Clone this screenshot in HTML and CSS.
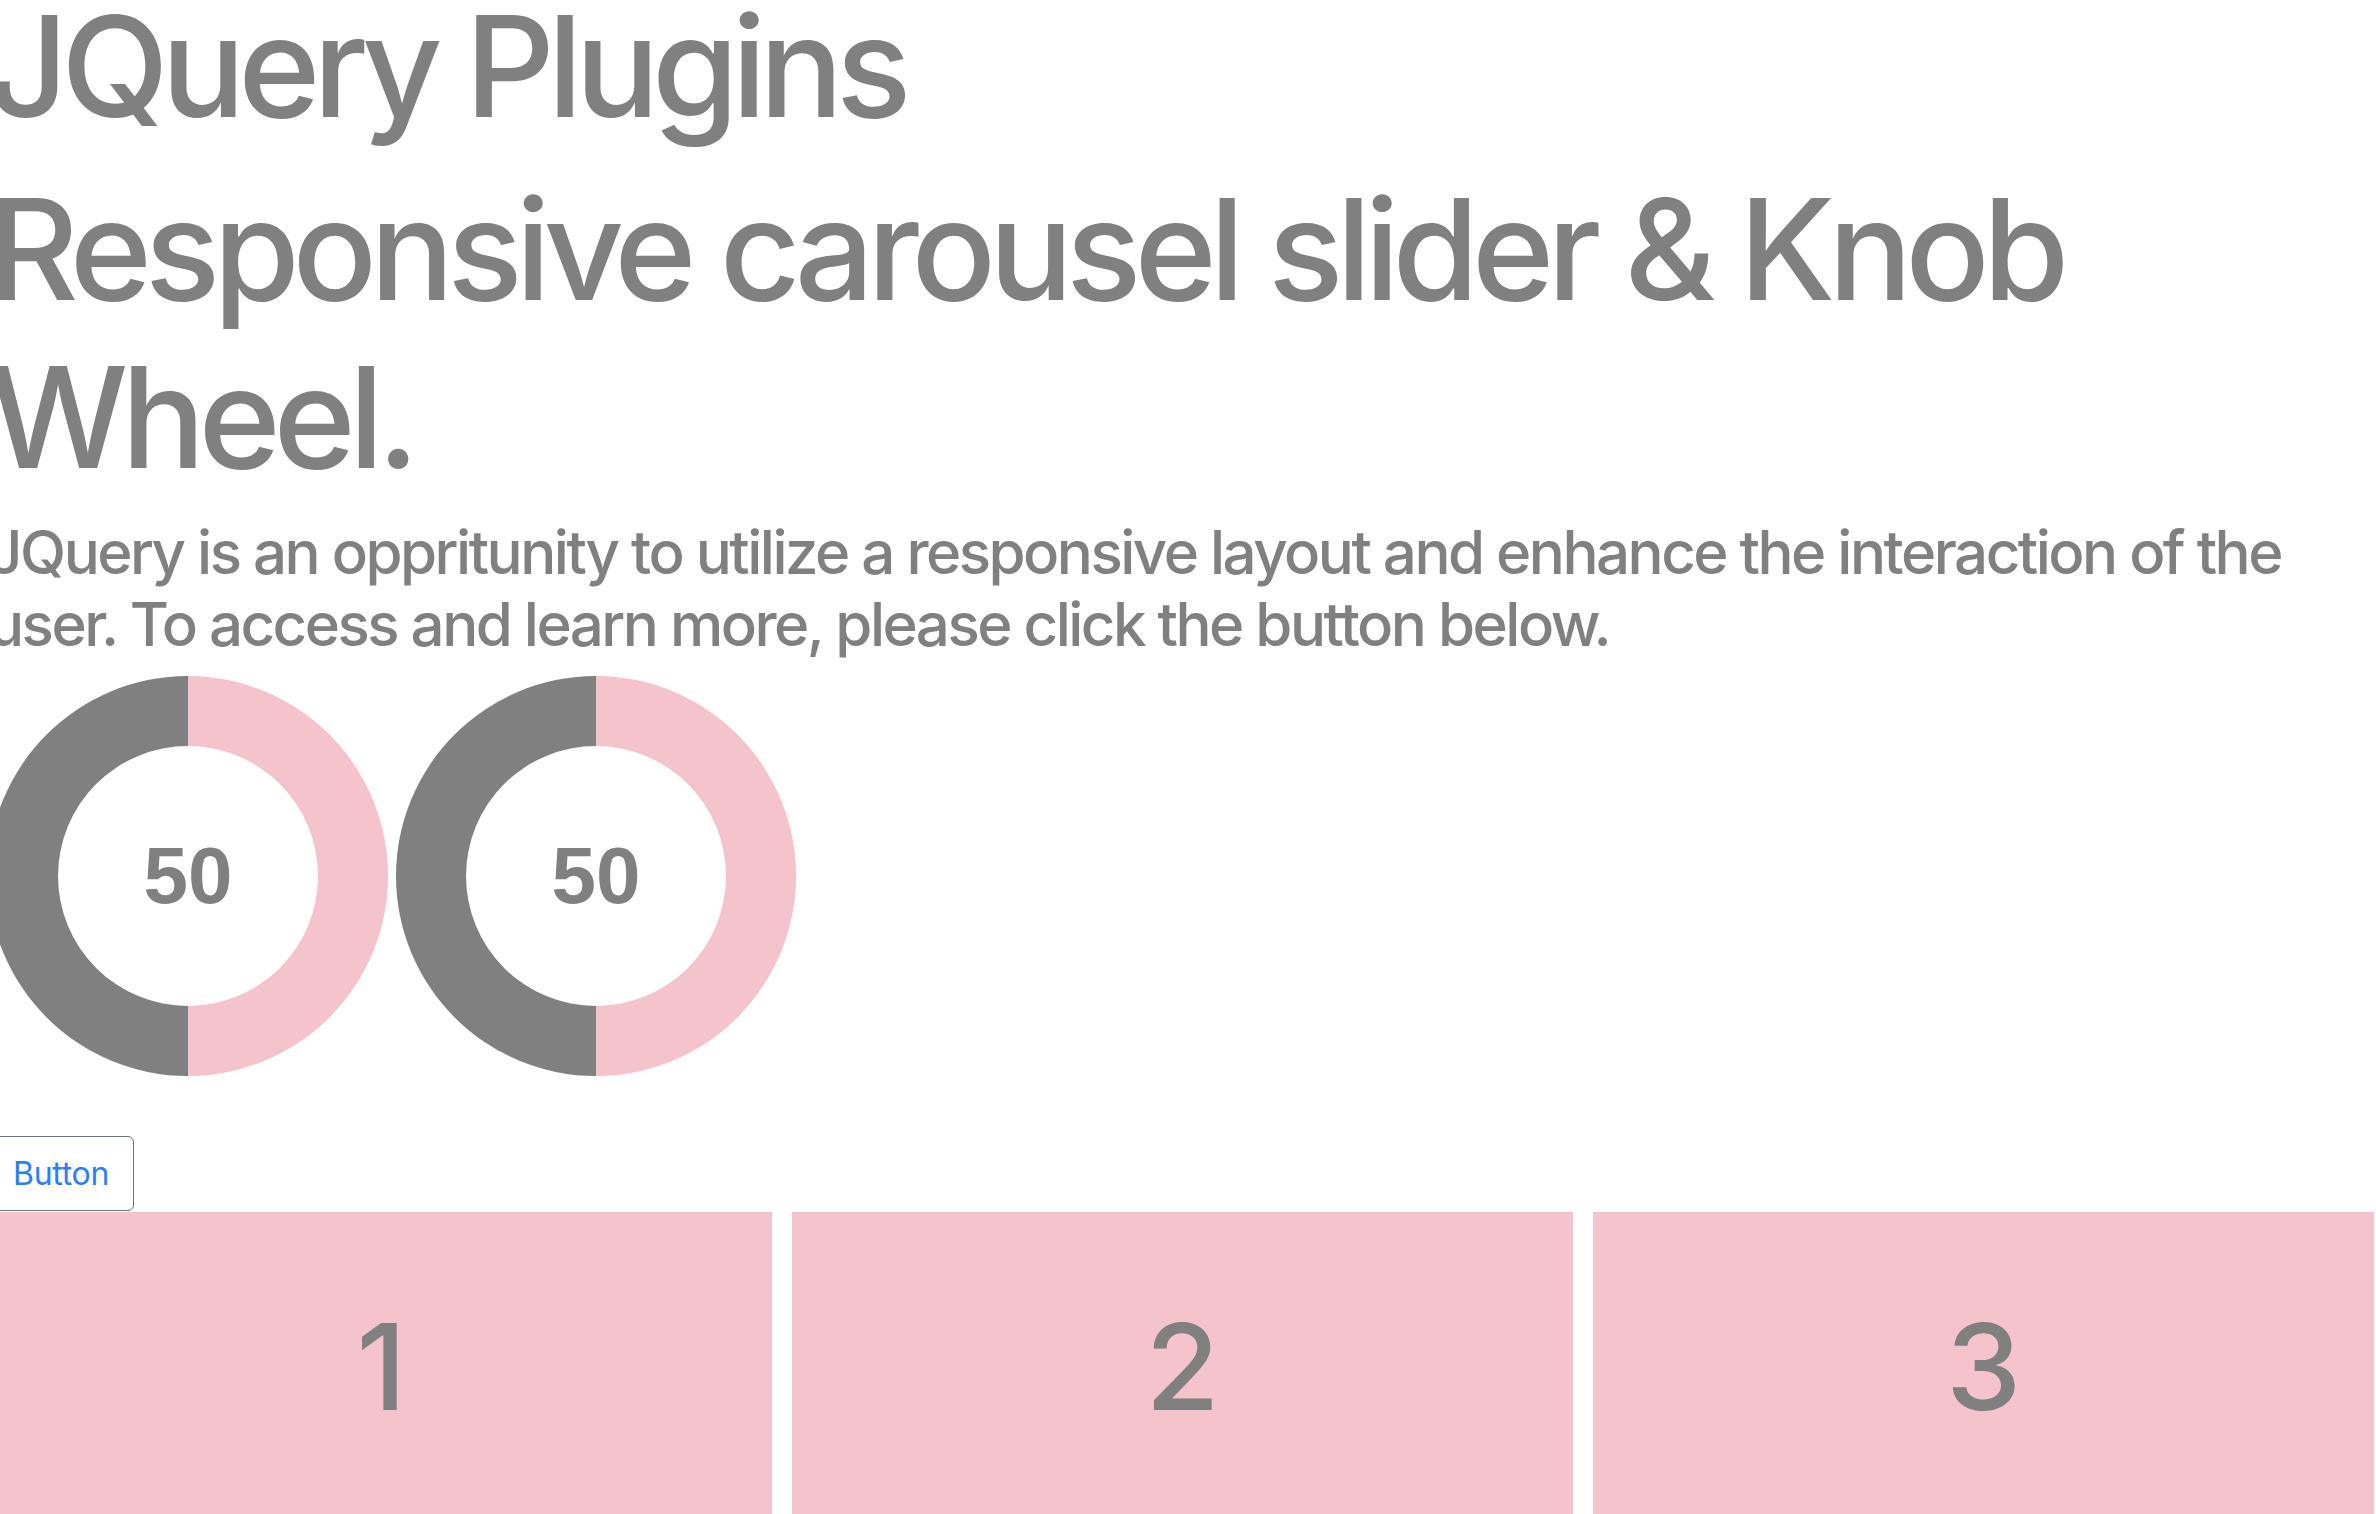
FILE: index.html
```html
<!DOCTYPE html>
<html lang="en">
<head>
<meta charset="utf-8">
<title>JQuery Plugins</title>
<link rel="stylesheet" href="styles.css">
</head>
<body>
<div class="page">
  <h1 class="title">JQuery Plugins</h1>
  <h2 class="subtitle">Responsive carousel slider &amp; Knob Wheel.</h2>
  <p class="lead">JQuery is an oppritunity to utilize a responsive layout and enhance the interaction of the user. To access and learn more, please click the button below.</p>
  <div class="knobs">
    <div class="knob"><div class="knob-hole"><span class="knob-value">50</span></div></div>
    <div class="knob"><div class="knob-hole"><span class="knob-value">50</span></div></div>
  </div>
  <button class="btn" type="button">Button</button>
  <div class="carousel">
    <div class="slide"><h3 class="slide-num">1</h3></div>
    <div class="slide"><h3 class="slide-num">2</h3></div>
    <div class="slide"><h3 class="slide-num">3</h3></div>
  </div>
</div>
</body>
</html>
```
FILE: styles.css
```css
html, body {
  margin: 0;
  padding: 0;
  background: #ffffff;
  overflow: hidden;
}

body {
  font-family: Inter, "Noto Sans", "Liberation Sans", sans-serif;
  color: #808080;
}

.page {
  margin: 0 -12px;
}

.title,
.subtitle {
  font-size: 140px;
  line-height: 168px;
  font-weight: 500;
  margin: 0;
}

.title {
  margin-top: -18px;
  letter-spacing: -7.4px;
}

.subtitle {
  margin-top: 15px;
  letter-spacing: -7.1px;
}

.lead {
  font-size: 60px;
  line-height: 72px;
  font-weight: 500;
  margin: 15px 0 0;
  letter-spacing: -2.5px;
}

.knobs {
  display: flex;
  gap: 8px;
  margin-top: 16px;
}

.knob {
  width: 400px;
  height: 400px;
  border-radius: 50%;
  background: conic-gradient(#f4c3cb 0deg 180deg, #808080 180deg 360deg);
  display: grid;
  place-items: center;
}

.knob-hole {
  width: 260px;
  height: 260px;
  border-radius: 50%;
  background: #ffffff;
  display: grid;
  place-items: center;
}

.knob-value {
  font-family: "Liberation Sans", Arial, sans-serif;
  font-weight: bold;
  font-size: 80px;
  color: #808080;
}

.btn {
  display: block;
  margin-top: 60px;
  font-family: Inter, "Noto Sans", "Liberation Sans", sans-serif;
  font-size: 32px;
  line-height: 48px;
  font-weight: 400;
  padding: 12.5px 24px;
  color: #2b7ff6;
  background: #ffffff;
  border: 1px solid #6c757d;
  border-radius: 6px;
  letter-spacing: -0.3px;
}

.carousel {
  display: flex;
  gap: 20px;
  margin-top: 1px;
  padding-left: 3px;
}

.slide {
  flex: 0 0 781px;
}

.slide-num {
  margin: 0;
  height: 308px;
  background: #f4c3cb;
  display: flex;
  align-items: center;
  justify-content: center;
  font-size: 120px;
  font-weight: 500;
  color: #808080;
}
```
